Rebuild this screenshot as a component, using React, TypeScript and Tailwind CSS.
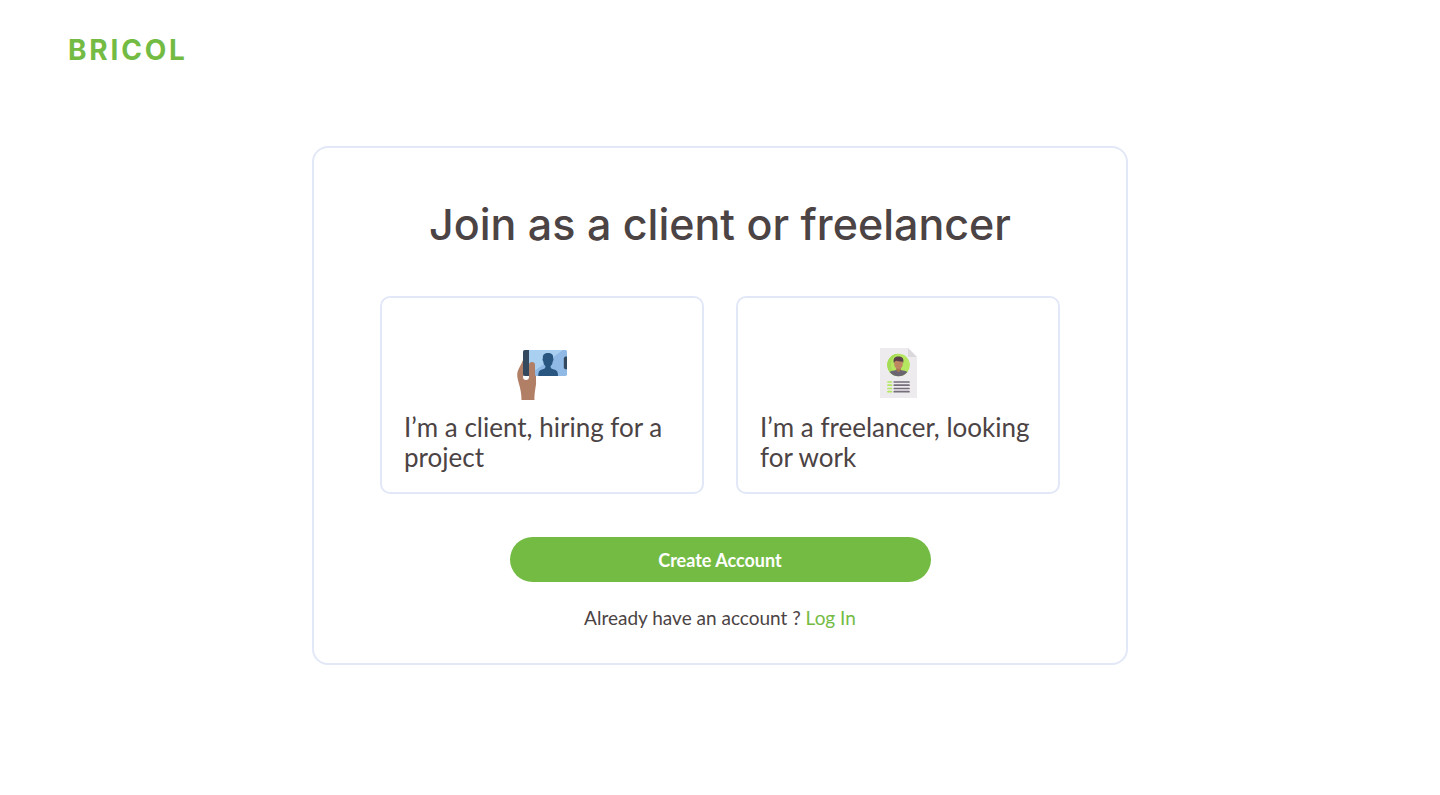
import type { ReactNode } from "react";

function ClientIcon() {
  return (
    <svg width="50" height="54" viewBox="0 -4 50 54" aria-hidden="true">
      <path d="M6 10 C4 15 1.5 18 .5 22 C-.3 26 .8 30 2 34 C3.5 39 4.5 44 4.5 50 H17.5 C17 44 18.8 38 19 33 V24 H6Z" fill="#b17f66" />
      <rect x="6" width="44" height="26" rx="2" fill="#a9d0f0" />
      <path d="M12 25 L46 0 H48 A2 2 0 0 1 50 2 V24 A2 2 0 0 1 48 26 H12Z" fill="#90bae5" />
      <path d="M12 0 H8 A2 2 0 0 0 6 2 V24 A2 2 0 0 0 8 26 H12Z" fill="#34495e" />
      <path d="M50 6.5 H48.5 A2 2 0 0 0 46.8 8.5 V17.5 A2 2 0 0 0 48.5 19.2 H50Z" fill="#34495e" />
      <path d="M21.3 26 C21.3 21.5 22.5 20.3 25 19.5 C27.3 18.8 28.5 18.3 28.5 16.2 C26.8 14.8 26.4 13 26.2 11 C25.3 10.5 25.4 8.5 26 8 C25.2 4.5 28 3 31 3 C34.2 3 36.8 4.5 36 8 C36.6 8.5 36.7 10.5 35.8 11 C35.6 13 35.2 14.8 33.5 16.2 C33.5 18.3 34.7 18.8 37 19.5 C39.8 20.3 41 21.5 41 26Z" fill="#285680" />
      <path d="M6 26 H12 V27 A3 3 0 0 1 6 27Z" fill="#fff" />
      <path d="M12 29 V15 A3 3 0 0 1 18 15 V24 C19 28 19.3 32 19 35 L12 36Z" fill="#b17f66" />
    </svg>
  );
}

function FreelancerIcon() {
  return (
    <svg width="37" height="50" viewBox="0 0 37 50" aria-hidden="true">
      <path d="M0 0 H28 L37 9 V50 H0Z" fill="#edebed" />
      <path d="M28 0 L37 9 H29.5 A1.5 1.5 0 0 1 28 7.5Z" fill="#dad8db" />
      <circle cx="18.5" cy="17" r="11.3" fill="#b4e75f" />
      <path d="M18.5 5.7 A11.3 11.3 0 0 0 18.5 28.3 C13 26 11 22 11 17 S13 8 18.5 5.7Z" fill="#a4dc55" />
      <path d="M9.6 24 C11 22.9 14 22.6 16 22 H21 C23 22.6 26 22.9 27.4 24 A11.3 11.3 0 0 1 9.6 24Z" fill="#6b6572" />
      <path d="M16.2 19 H20.8 V22.3 L18.5 24.6 L16.2 22.3Z" fill="#a87552" />
      <path d="M14.2 12 H22.8 V16 C22.8 19 20.5 21 18.5 21 C16.5 21 14.2 19 14.2 16Z" fill="#bd8762" />
      <path d="M13.8 15 C13 11 14 8.5 18.5 8.5 C23 8.5 24 11 23.2 15 L22.4 13.5 C20 13.8 18 13 16.5 12.8 C15 13 14.7 13.8 13.8 15Z" fill="#59404b" />
      <g strokeWidth="1.7" strokeLinecap="round">
        <path d="M8 34 H11.5 M8 37.2 H11.5 M8 40.5 H11.5 M8 43.7 H11.5" stroke="#b4e75f" />
        <path d="M14.3 34 H29 M14.3 37.2 H29 M14.3 40.5 H29 M14.3 43.7 H29" stroke="#746e7b" />
      </g>
    </svg>
  );
}

function RoleCard({ icon, children }: { icon: ReactNode; children: ReactNode }) {
  return (
    <button
      type="button"
      className="flex flex-1 cursor-pointer flex-col rounded-[10px] border-2 border-[#e2e8f7] px-[22px] pt-12 pb-5 text-left text-[26px] leading-[30px]"
    >
      <span className="flex h-[54px] w-full items-center justify-center">{icon}</span>
      <span className="mt-3 block">{children}</span>
    </button>
  );
}

export default function App() {
  return (
    <div className="min-h-screen bg-white font-['Lato',sans-serif] text-[#4b4344]">
      <header className="px-[68px] pt-8">
        <a
          href="#"
          className="inline-block font-['Inter',sans-serif] text-[28px] leading-9 font-bold tracking-widest text-[#74bb44]"
        >
          BRICOL
        </a>
      </header>
      <main className="mx-auto mt-[78px] max-w-[816px] rounded-2xl border-2 border-[#e2e8f7] px-[66px] pt-12 pb-[33px]">
        <h1 className="text-center font-['Inter',sans-serif] text-[43px] leading-[56px] font-medium">
          Join as a client or freelancer
        </h1>
        <div className="mt-11 flex gap-8">
          <RoleCard icon={<ClientIcon />}>I’m a client, hiring for a project</RoleCard>
          <RoleCard icon={<FreelancerIcon />}>I’m a freelancer, looking for work</RoleCard>
        </div>
        <button
          type="button"
          className="mx-auto mt-[43px] block h-[45px] w-full max-w-[421px] cursor-pointer rounded-full bg-[#74bb44] text-lg font-bold text-white"
        >
          Create Account
        </button>
        <p className="mt-6 text-center text-[19px] leading-6">
          Already have an account ?{" "}
          <a href="#" className="text-[#74bb44]">
            Log In
          </a>
        </p>
      </main>
    </div>
  );
}
